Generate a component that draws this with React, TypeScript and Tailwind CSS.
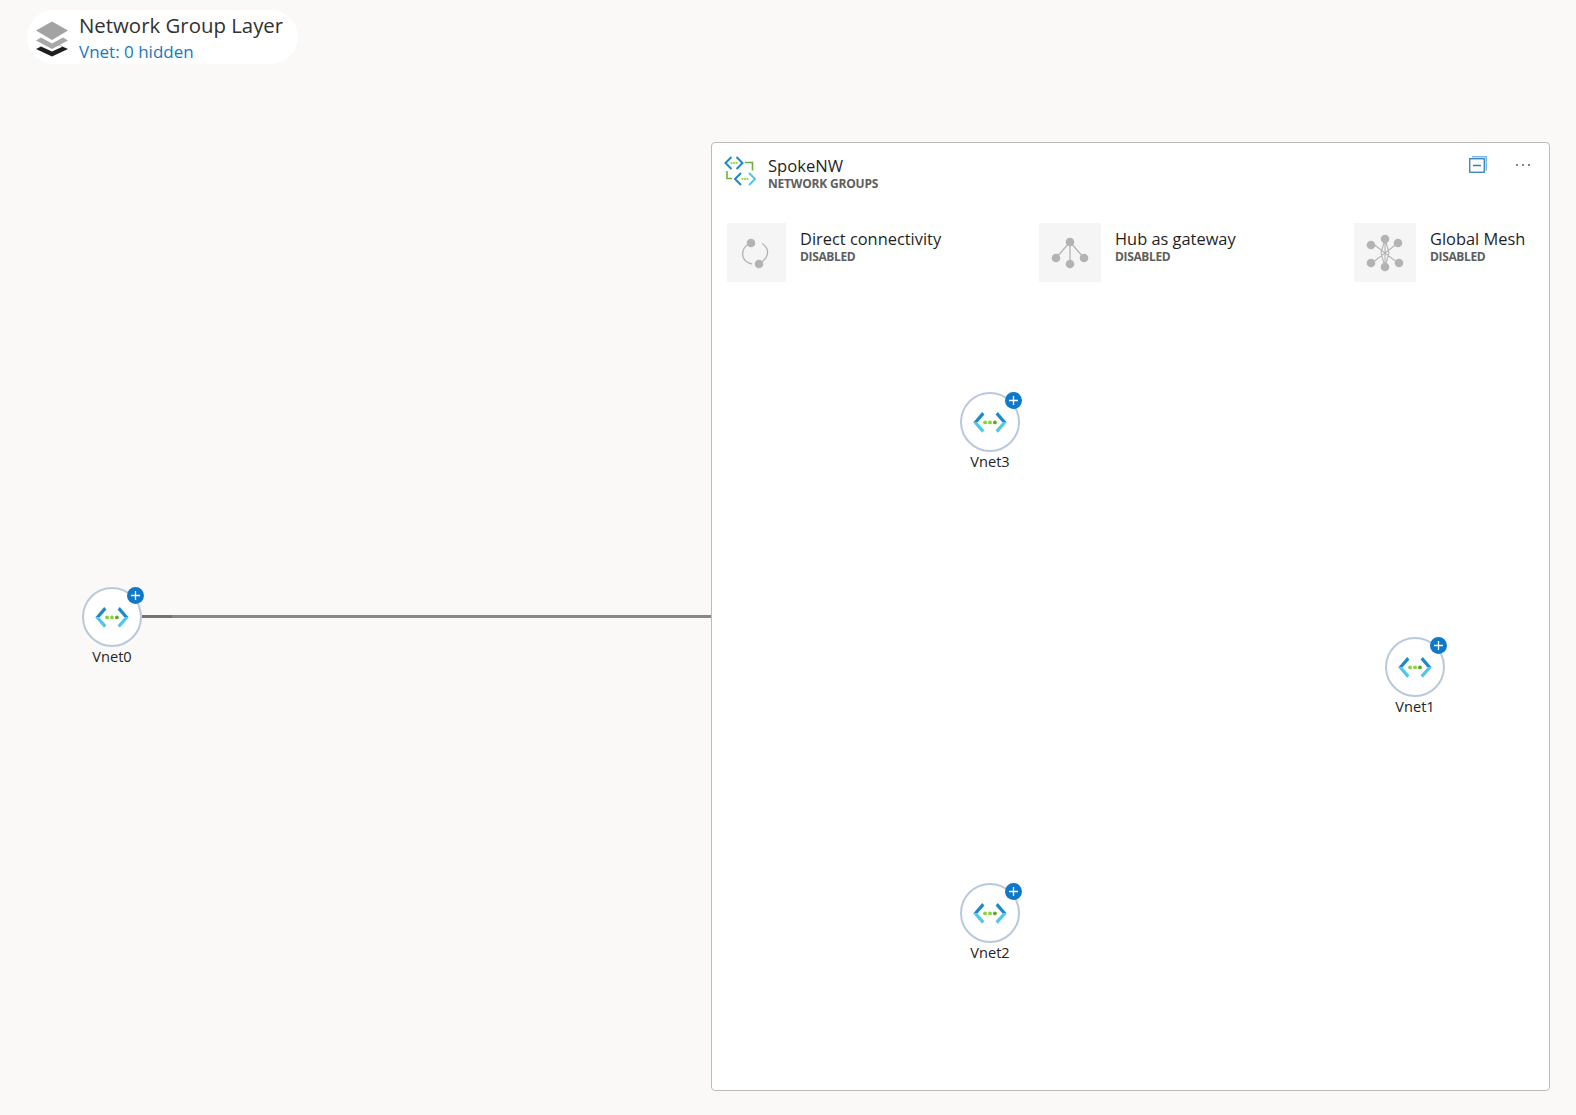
const FONT = "font-['Open_Sans','Noto_Sans',sans-serif]";

function VnetGlyph({ size = 38 }: { size?: number }) {
  return (
    <svg width={size} height={size * 0.6} viewBox="0 0 34 20" fill="none">
      <path d="M10 .8 2 10h3.800L12 3Z" fill="#1c8ac9" />
      <path d="M2 10l8 9.200 2-2.200L5.800 10Z" fill="#50c7ea" />
      <path d="M24 .8 32 10h-3.800L22 3Z" fill="#1c8ac9" />
      <path d="M32 10l-8 9.200-2-2.200L28.200 10Z" fill="#50c7ea" />
      <circle cx="12.600" cy="10" r="1.700" fill="#86d633" />
      <circle cx="17" cy="10" r="1.700" fill="#86d633" />
      <circle cx="21.400" cy="10" r="1.700" fill="#5ea52c" />
    </svg>
  );
}

function VnetNode({ name, className }: { name: string; className: string }) {
  return (
    <div className={`absolute w-[60px] flex flex-col items-center ${className}`}>
      <div className="relative w-[60px] h-[60px] shrink-0 rounded-full bg-white border-2 border-[#b8c9dc] flex items-center justify-center">
        <VnetGlyph />
        <div className="absolute -top-[2px] -right-[4px] w-[17px] h-[17px] rounded-full bg-[#0f78c8] flex items-center justify-center">
          <svg width="11" height="11" viewBox="0 0 11 11">
            <path d="M5.500 1v9M1 5.500h9" stroke="#fff" strokeWidth="1.300" />
          </svg>
        </div>
      </div>
      <span className="-mt-[1px] text-[14.6px] leading-[20px] text-[#252423] whitespace-nowrap">{name}</span>
    </div>
  );
}

function LayersIcon() {
  return (
    <svg width="34" height="36" viewBox="0 0 34 36">
      <path d="M17 21 33 28 17 35.500 1 28l5-2.500 11 5 11-5Z" fill="#1f1f1f" />
      <path d="M6 16.500 1 19.500 17 28l16-8.500-5-3-11 6Z" fill="#a8a8a8" />
      <path d="M17 .5 33 9.500 17 19 1 9.500Z" fill="#a3a3a3" />
    </svg>
  );
}

function GroupIcon() {
  return (
    <svg width="32" height="30" viewBox="0 0 32 30" fill="none">
      <path d="M7.500 1 1.500 7 7.500 13" stroke="#1c8ac9" strokeWidth="2" />
      <path d="M12.500 1 18.500 7 12.500 13" stroke="#1c8ac9" strokeWidth="2" />
      <circle cx="7.500" cy="7" r="1.100" fill="#86d633" />
      <circle cx="10" cy="7" r="1.100" fill="#86d633" />
      <circle cx="12.500" cy="7" r="1.100" fill="#86d633" />
      <path d="M17 17 11 23 17 29" stroke="#1c8ac9" strokeWidth="2" />
      <path d="M25 17 31 23 25 29" stroke="#50c7ea" strokeWidth="2" />
      <circle cx="18.500" cy="23" r="1.100" fill="#86d633" />
      <circle cx="21" cy="23" r="1.100" fill="#86d633" />
      <circle cx="23.500" cy="23" r="1.100" fill="#86d633" />
      <path d="M21 6.500h7.500v8" stroke="#6fae3a" strokeWidth="1.600" />
      <path d="M3 15v7.500h5" stroke="#6fae3a" strokeWidth="1.600" />
    </svg>
  );
}

function DirectIcon() {
  return (
    <svg width="30" height="32" viewBox="0 0 30 32" fill="none" className="-ml-[3px]">
      <path d="M22 6.500C27 9 28.500 14 27 18.500 26 21.500 24 23.500 22 25" stroke="#b5b3b1" strokeWidth="1.300" />
      <path d="M8 7.500C3.500 10.500 2 15 3 19.500 4 23.500 8 26.500 12 27" stroke="#b5b3b1" strokeWidth="1.300" />
      <circle cx="11" cy="6" r="4.300" fill="#b5b3b1" />
      <circle cx="19" cy="27" r="4.300" fill="#b5b3b1" />
    </svg>
  );
}

function HubIcon() {
  return (
    <svg width="38" height="32" viewBox="0 0 38 32" fill="none">
      <path d="M19 5v22M19 5 5 21M19 5l14 16" stroke="#b5b3b1" strokeWidth="1.300" />
      <circle cx="19" cy="5" r="4.300" fill="#b5b3b1" />
      <circle cx="5" cy="21" r="4.300" fill="#b5b3b1" />
      <circle cx="33" cy="21" r="4.300" fill="#b5b3b1" />
      <circle cx="19" cy="27" r="4.300" fill="#b5b3b1" />
    </svg>
  );
}

function MeshIcon() {
  return (
    <svg width="38" height="38" viewBox="0 0 38 38" fill="none">
      <path d="M6 9 32 29M32 9 6 29M19 5v28M19 5l-4 14 4 14M19 5l4 14-4 14" stroke="#b5b3b1" strokeWidth="1.100" />
      <circle cx="19" cy="5" r="4.300" fill="#b5b3b1" />
      <circle cx="5" cy="11" r="4.300" fill="#b5b3b1" />
      <circle cx="32" cy="9" r="4.300" fill="#b5b3b1" />
      <circle cx="5" cy="29" r="4.300" fill="#b5b3b1" />
      <circle cx="33" cy="29" r="4.300" fill="#b5b3b1" />
      <circle cx="19" cy="33" r="4.300" fill="#b5b3b1" />
    </svg>
  );
}

function CollapseIcon() {
  return (
    <svg width="18" height="17" viewBox="0 0 18 17" fill="none">
      <path d="M3 .75h14.250v14" stroke="#7db7e6" strokeWidth="1.500" />
      <rect x=".75" y="2.750" width="14.500" height="13.500" stroke="#2d7fb8" strokeWidth="1.300" fill="#fff" />
      <path d="M4 9.500h8" stroke="#2d7fb8" strokeWidth="1.500" />
    </svg>
  );
}

function Feature({ title, icon, w, className }: { title: string; icon: React.ReactNode; w: string; className: string }) {
  return (
    <div className={`flex items-start ${className}`}>
      <div className={`h-[59px] bg-[#f5f5f5] flex items-center justify-center shrink-0 ${w}`}>{icon}</div>
      <div className="ml-[14px] pt-[5px]">
        <div className="text-[16.400px] leading-[21px] text-[#1f1f1f] whitespace-nowrap">{title}</div>
        <div className="mt-[1px] text-[12px] leading-[14px] font-bold text-[#605e5c] tracking-[-0.35px]">DISABLED</div>
      </div>
    </div>
  );
}

export default function App() {
  return (
    <div className={`relative w-[1576px] h-[1115px] overflow-hidden bg-[#faf9f8] ${FONT}`}>
      <div className="absolute left-[27px] top-[10px] w-[271px] h-[54px] rounded-[27px] bg-white flex items-center pl-[8px]">
        <div className="mt-[3px]">
          <LayersIcon />
        </div>
        <div className="ml-[10px]">
          <div className="text-[20.400px] leading-[28px] text-[#323130] whitespace-nowrap">Network Group Layer</div>
          <div className="mt-[1px] text-[17px] leading-[24px] text-[#1a79b8] whitespace-nowrap">Vnet: 0 hidden</div>
        </div>
      </div>

      {/* edge from Vnet0 to the group */}
      <div className="absolute left-[142px] top-[615px] w-[570px] h-[3px] bg-[#8a8886]" />
      <div className="absolute left-[142px] top-[615px] w-[30px] h-[3px] bg-[#737373]" />

      <div className="absolute left-[711px] top-[142px] w-[839px] h-[949px] bg-white border border-[#bdbbb9] rounded-[4px]">
        <div className="flex items-start pl-[12px] pt-[13px]">
          <GroupIcon />
          <div className="ml-[12px]">
            <div className="text-[16.600px] leading-[20px] text-[#1f1f1f]">SpokeNW</div>
            <div className="text-[12px] leading-[15px] font-bold text-[#605e5c] tracking-[-0.2px]">NETWORK GROUPS</div>
          </div>
          <div className="ml-auto flex items-center pr-[19px]">
            <CollapseIcon />
            <div className="ml-[29px] flex gap-[4px]">
              <span className="w-[2px] h-[2px] rounded-full bg-[#605e5c]" />
              <span className="w-[2px] h-[2px] rounded-full bg-[#605e5c]" />
              <span className="w-[2px] h-[2px] rounded-full bg-[#605e5c]" />
            </div>
          </div>
        </div>
        <div className="flex mt-[32px] pl-[15px]">
          <Feature title="Direct connectivity" icon={<DirectIcon />} w="w-[59px]" className="w-[312px]" />
          <Feature title="Hub as gateway" icon={<HubIcon />} w="w-[62px]" className="w-[315px]" />
          <Feature title="Global Mesh" icon={<MeshIcon />} w="w-[62px]" className="" />
        </div>
      </div>

      <VnetNode name="Vnet0" className="left-[82px] top-[587px]" />
      <VnetNode name="Vnet3" className="left-[960px] top-[392px]" />
      <VnetNode name="Vnet1" className="left-[1385px] top-[637px]" />
      <VnetNode name="Vnet2" className="left-[960px] top-[883px]" />
    </div>
  );
}
